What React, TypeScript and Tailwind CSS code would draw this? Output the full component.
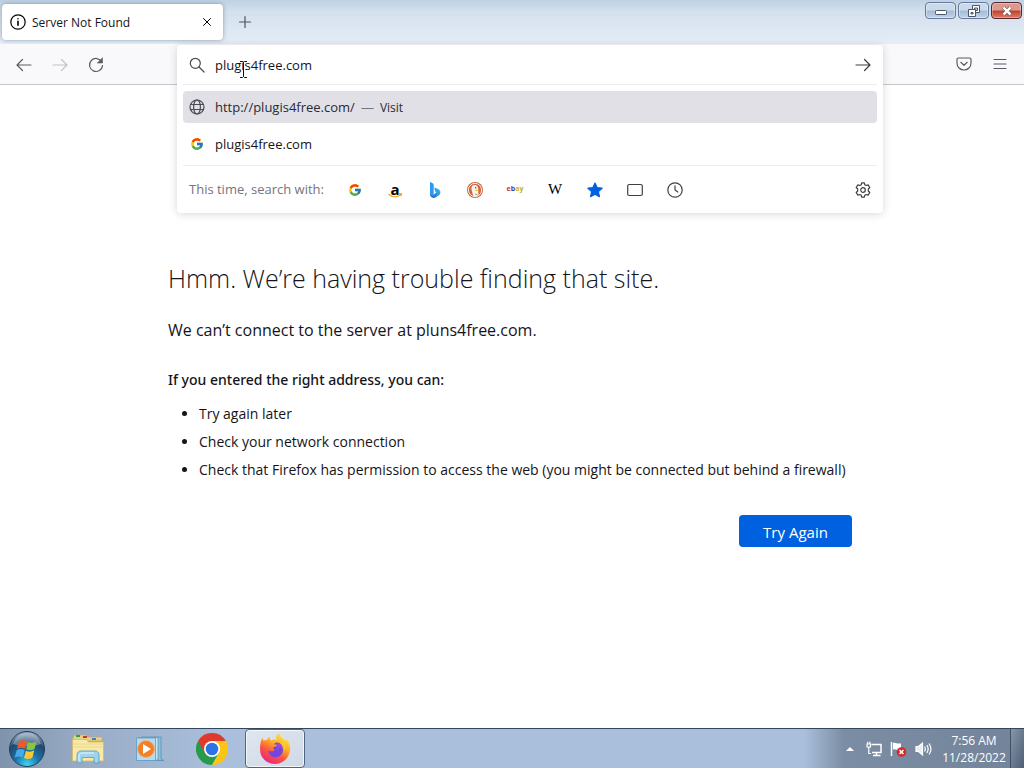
import type { ReactNode } from "react";
import { FcGoogle } from "react-icons/fc";

const tips = [
  "Try again later",
  "Check your network connection",
  "Check that Firefox has permission to access the web (you might be connected but behind a firewall)",
];

function Icon({ children, className = "w-4 h-4" }: { children: ReactNode; className?: string }) {
  return (
    <svg
      viewBox="0 0 16 16"
      className={className}
      fill="none"
      stroke="currentColor"
      strokeWidth="1.2"
      strokeLinecap="round"
      strokeLinejoin="round"
      aria-hidden="true"
    >
      {children}
    </svg>
  );
}

function TabStrip() {
  return (
    <div className="flex h-11 items-start bg-linear-to-b from-[#bfd1e4] via-[#d3e0ed] via-25% to-[#e6eef6]">
      <div className="mt-1 ml-0.5 flex h-9 w-[221px] items-center rounded bg-white pr-2 pl-2 shadow-[0_0_4px_rgba(60,80,110,0.5)]">
        <Icon>
          <circle cx="8" cy="8" r="7.2" />
          <path d="M8 7.2v4M8 4.7v.1" strokeWidth="1.6" />
        </Icon>
        <span className="ml-1.5 flex-1 pt-0.5 text-xs text-[#15141a]">Server Not Found</span>
        <button aria-label="Close tab" className="p-1">
          <Icon className="h-2 w-2">
            <path d="M1 1l14 14M15 1L1 15" strokeWidth="2" />
          </Icon>
        </button>
      </div>
      <button aria-label="New tab" className="mt-3.5 ml-3.5 text-[#4b5563]">
        <Icon>
          <path d="M8 2.5v11M2.5 8h11" />
        </Icon>
      </button>
      <div className="mt-0.5 mr-0.5 ml-auto flex gap-0.5">
        <button
          aria-label="Minimize"
          className="flex h-[17px] w-[31px] items-center justify-center rounded-sm border border-[#64789a] bg-linear-to-b from-[#cbdaea] from-45% via-[#a6bcd6] via-55% to-[#c0d3e8] inset-ring inset-ring-white/40"
        >
          <svg viewBox="0 0 12 6" className="mt-1 h-1.5 w-3">
            <rect x=".5" y=".5" width="11" height="4" rx=".8" fill="#fff" stroke="#4a5568" />
          </svg>
        </button>
        <button
          aria-label="Restore"
          className="flex h-[17px] w-[31px] items-center justify-center rounded-sm border border-[#64789a] bg-linear-to-b from-[#cbdaea] from-45% via-[#a6bcd6] via-55% to-[#c0d3e8] inset-ring inset-ring-white/40"
        >
          <svg viewBox="0 0 12 12" className="h-3 w-3" stroke="#4a5568" fill="#fff">
            <path d="M4.5 .5h7v7h-7zM6.500 3h3v2.500h-3z" fillRule="evenodd" />
            <path d="M.5 4.500h7v7h-7zM3 7.500h2v1.500H3z" fillRule="evenodd" />
          </svg>
        </button>
        <button
          aria-label="Close"
          className="flex h-[17px] w-[31px] items-center justify-center rounded-sm border border-[#5c2630] bg-linear-to-b from-[#dc9a8e] from-45% via-[#c0422e] via-55% to-[#dc7d68] inset-ring inset-ring-white/30"
        >
          <svg viewBox="0 0 12 10" className="h-2.5 w-3" fill="none">
            <path d="M2.500 1.500l7 7M9.500 1.500l-7 7" stroke="#5b3a42" strokeWidth="3.800" />
            <path d="M2.500 1.500l7 7M9.500 1.500l-7 7" stroke="#fff" strokeWidth="2.500" />
          </svg>
        </button>
      </div>
    </div>
  );
}

function BingIcon() {
  return (
    <svg viewBox="0 0 16 16" className="h-4 w-4">
      <defs>
        <linearGradient id="bing-bowl" x1="1" y1="0" x2="0" y2="1">
          <stop offset="0" stopColor="#3fc4f0" />
          <stop offset="1" stopColor="#1a5fd0" />
        </linearGradient>
      </defs>
      <path d="M3 .6c0-.4.400-.6.800-.4l2.200 1.400c.5.3.7.7.7 1.300V13c0 1.600-3.700 2-3.700-.3z" fill="#2e97ee" />
      <path d="M3 12c.2 2 3 2 3.700.5l2.600-2c-.8-.4-1-1-1.300-1.800l-.7-2.200c-.2-.7.3-1 .9-.8l3 1.300c3 1.400 2.800 4.800.6 6.300l-3.300 2.200C5.800 17 3 15 3 12z" fill="url(#bing-bowl)" />
    </svg>
  );
}

function DuckIcon() {
  return (
    <svg viewBox="0 0 16 16" className="h-4 w-4">
      <circle cx="8" cy="8" r="8" fill="#cf6440" />
      <circle cx="8" cy="8" r="6.600" fill="#d0663f" stroke="#fff" strokeWidth=".9" />
      <path d="M4.600 5c.8-2.400 4.600-2.800 6-.4.9 1.500.5 3 .6 4.200l.3 4.200c-1.700 1.300-3.600 1.500-5.300.8C5.700 11 3.900 8 4.600 5z" fill="#fbf3ea" />
      <circle cx="8.600" cy="5.800" r=".8" fill="#33475c" />
      <path d="M8 8c1.200-.7 2.900-.7 3.900-.2-.5 1-2 1.400-3.600 1.500z" fill="#fdc531" />
      <path d="M8.400 11.500l2.600.7-2.400 1z" fill="#5bb44b" />
    </svg>
  );
}

function SearchEngines() {
  return (
    <div className="flex h-12 items-center border-t border-[#ececef] text-[#3f3f48]">
      <span className="w-[160px] pl-1.5 text-[13px] text-[#74747d]">This time, search with:</span>
      <div className="flex flex-1 items-center gap-6 pl-1">
        <button aria-label="Google" className="flex h-4 w-4 items-center justify-center">
          <FcGoogle className="h-3.5 w-3.5" />
        </button>
        <button aria-label="Amazon" className="relative h-4 w-4">
          <span className="block text-center text-[15px] leading-[9px] font-bold text-black">a</span>
          <svg viewBox="0 0 16 5" className="absolute bottom-0 h-[5px] w-4" fill="none" stroke="#f5a623" strokeWidth="1.400">
            <path d="M1.500 1c3.500 3.300 8.300 3.500 12 1M12 .8l2.300-.1-.5 2.300" />
          </svg>
        </button>
        <button aria-label="Bing">
          <BingIcon />
        </button>
        <button aria-label="DuckDuckGo">
          <DuckIcon />
        </button>
        <button aria-label="eBay" className="flex h-4 w-4 items-center justify-center text-[7px] font-bold">
          <span className="text-[#d8343c]">e</span>
          <span className="text-[#3a42b4]">b</span>
          <span className="text-[#e8ae17]">a</span>
          <span className="text-[#a6b830]">y</span>
        </button>
        <button aria-label="Wikipedia" className="flex h-4 w-4 items-center justify-center font-['Liberation_Serif',serif] text-[15px] text-black">
          W
        </button>
        <button aria-label="Bookmarks" className="text-[#0061e0]">
          <Icon>
            <path d="M8 1l2.100 4.600 5 .6-3.700 3.400 1 5L8 12.200l-4.400 2.400 1-5L.9 6.200l5-.6z" fill="currentColor" />
          </Icon>
        </button>
        <button aria-label="Tabs">
          <Icon>
            <rect x=".7" y="2.500" width="14.600" height="11" rx="1.500" />
          </Icon>
        </button>
        <button aria-label="History">
          <Icon>
            <circle cx="8" cy="8" r="7.200" />
            <path d="M8 3.800V8l2.800 2" />
          </Icon>
        </button>
      </div>
      <button aria-label="Search settings" className="mr-1.5">
        <Icon>
          <circle cx="8" cy="8" r="2.300" />
          <path d="M6.700 .8h2.600l.5 2 1.300.7 2-.6 1.700 2.600-1.500 1.500v2l1.500 1.500-1.700 2.600-2-.6-1.300.7-.5 2H6.700l-.5-2-1.300-.7-2 .6-1.700-2.600L2.700 9V7L1.200 5.500l1.700-2.600 2 .6 1.300-.7z" />
        </Icon>
      </button>
    </div>
  );
}

function UrlPanel() {
  return (
    <div className="absolute inset-x-0 top-px z-10 rounded-sm bg-white px-1.5 shadow-[0_1px_8px_rgba(0,0,0,0.16)]">
      <form className="relative flex h-10 items-center border-b border-[#ececef] px-1.5">
        <span className="text-[#4a4a55]">
          <Icon>
            <circle cx="6.300" cy="6.300" r="5" />
            <path d="M10 10l5 5" />
          </Icon>
        </span>
        <input
          aria-label="Search or enter address"
          defaultValue="plugis4free.com"
          className="ml-2.5 min-w-0 flex-1 bg-transparent pt-0.5 text-[13px] text-[#15141a] outline-none"
        />
        <button aria-label="Go" type="button" className="text-[#3c3c46]">
          <Icon>
            <path d="M1 8h14M9.500 2.500L15 8l-5.500 5.500" />
          </Icon>
        </button>
        <svg viewBox="0 0 9 17" className="pointer-events-none absolute top-4 left-14 h-[17px] w-[9px]" fill="none" stroke="#111">
          <path d="M1 .5h2.500l1 1 1-1H8M4.500 1.500v14M1 16.500h2.500l1-1 1 1H8" />
        </svg>
      </form>
      <div className="pt-1.5 pb-[5px]">
        <a href="#visit" className="flex h-8 items-center rounded bg-[#e0e0e6] px-1.5 text-[13px] text-[#2b2a33]">
          <span className="text-[#4a4a55]">
            <Icon>
              <circle cx="8" cy="8" r="7" />
              <ellipse cx="8" cy="8" rx="3.400" ry="7" />
              <path d="M1.500 5.500h13M1.500 10.500h13" />
            </Icon>
          </span>
          <span className="ml-2.5 pt-0.5">http://plugis4free.com/</span>
          <span className="mx-1.5 pt-0.5 text-[#74747d]">—</span>
          <span className="pt-0.5 text-xs">Visit</span>
        </a>
        <a href="#search" className="mt-[5px] flex h-8 items-center px-1.5 text-[13px] text-[#15141a]">
          <span className="flex w-4 justify-center">
            <FcGoogle className="h-3.5 w-3.5" />
          </span>
          <span className="ml-2.5 pt-0.5">plugis4free.com</span>
        </a>
      </div>
      <SearchEngines />
    </div>
  );
}

function Toolbar() {
  return (
    <div className="flex h-[41px] items-start border-b border-[#c5c5ca] bg-[#f9f9fb] text-[#5b5b66]">
      <div className="flex h-[41px] w-[177px] items-center gap-5 pl-4">
        <button aria-label="Back">
          <Icon>
            <path d="M15 8H1M6.500 2.500L1 8l5.500 5.500" />
          </Icon>
        </button>
        <button aria-label="Forward" className="text-[#c2c2c8]">
          <Icon>
            <path d="M1 8h14M9.500 2.500L15 8l-5.500 5.500" />
          </Icon>
        </button>
        <button aria-label="Reload">
          <Icon>
            <path d="M13.800 5A6.500 6.500 0 1 0 14.500 8.500" />
            <path d="M14.500 1v5h-5z" fill="currentColor" strokeWidth=".6" />
          </Icon>
        </button>
      </div>
      <div className="relative flex-1">
        <UrlPanel />
      </div>
      <div className="flex h-10 w-[141px] items-center justify-end gap-5 pr-4">
        <button aria-label="Save to Pocket">
          <Icon>
            <path d="M2.200 2h11.600c.8 0 1.200.5 1.200 1.200V7c0 4-3 7-7 7S1 11 1 7V3.200C1 2.500 1.400 2 2.200 2z" />
            <path d="M4.800 6.300L8 9.300l3.200-3" />
          </Icon>
        </button>
        <button aria-label="Menu">
          <Icon>
            <path d="M2 3.500h12M2 8h12M2 12.500h12" />
          </Icon>
        </button>
      </div>
    </div>
  );
}

function ErrorPage() {
  return (
    <main className="flex-1 px-4 pt-[175px] text-[#15141a]">
      <div className="mx-auto max-w-[688px]">
        <h1 className="text-[25px] leading-9 font-light">Hmm. We’re having trouble finding that site.</h1>
        <p className="mt-[22px] text-base leading-6">We can’t connect to the server at pluns4free.com.</p>
        <h2 className="mt-6 font-['Noto_Sans',sans-serif] text-sm leading-7 font-medium">
          If you entered the right address, you can:
        </h2>
        <ul className="mt-1.5 list-disc pl-[31px] text-sm leading-7">
          {tips.map((tip) => (
            <li key={tip}>{tip}</li>
          ))}
        </ul>
        <div className="mt-[31px] flex justify-end pr-1">
          <button className="h-8 w-[113px] rounded bg-[#0061e0] pt-0.5 text-[15px] text-white">Try Again</button>
        </div>
      </div>
    </main>
  );
}

function StartOrb() {
  return (
    <svg viewBox="0 0 38 38" className="h-[38px] w-[38px]">
      <defs>
        <radialGradient id="orb" cx=".5" cy=".95" r=".9">
          <stop offset="0" stopColor="#3fd6f5" />
          <stop offset=".4" stopColor="#1873a8" />
          <stop offset=".75" stopColor="#23476e" />
          <stop offset="1" stopColor="#8aa3ba" />
        </radialGradient>
      </defs>
      <circle cx="19" cy="19" r="17.500" fill="url(#orb)" stroke="#20405f" />
      <path d="M5 14C8 6 13 3 19 3s11 3 14 11c-8 3-20 3-28 0z" fill="#fff" opacity=".3" />
      <path d="M11 11.500c3-1.800 5.500-1.500 8 0l-2 7.500c-2.500-1.500-5-1.700-8 0z" fill="#ee5a24" />
      <path d="M20 12c2.700 1.400 5.300 1.300 8.500-.5l-2 7.500c-3 1.700-5.500 1.700-8.200.3z" fill="#8ac540" />
      <path d="M8.700 20.300c3-1.700 5.500-1.500 8 0l-2 7.200c-2.600-1.500-5-1.500-8 0z" fill="#4aa8e8" />
      <path d="M18 20.700c2.700 1.400 5.300 1.300 8.300-.4l-2 7.400c-3 1.700-5.600 1.600-8.300.2z" fill="#fdc82f" />
    </svg>
  );
}

function ExplorerIcon() {
  return (
    <svg viewBox="0 0 34 30" className="h-[30px] w-[34px]">
      <path d="M2 3l2-2h11l2 2h14v4H2z" fill="#e9d184" stroke="#c5a44e" strokeWidth=".6" />
      <path d="M5 1h4v2H5z" fill="#2f9e44" />
      <path d="M12 2h4v2h-4z" fill="#c0392b" />
      <path d="M21 4h4v2h-4z" fill="#3b82c4" />
      <path d="M1.500 5.500h14l2 2.500h15v19h-31z" fill="#f8e9a8" stroke="#d6b75e" strokeWidth=".7" />
      <path d="M2 13h30M2 10h30" stroke="#ecd88c" />
      <path d="M6 29v-8c0-3 2-4 4-4h14c2 0 4 1 4 4v8h-5v-5.500H11V29z" fill="#9fd3ee" stroke="#4f9ac4" strokeWidth=".8" />
      <path d="M8 27v-5c0-2 1-3 3-3h12" stroke="#e6f7ff" fill="none" />
    </svg>
  );
}

function MediaPlayerIcon() {
  return (
    <svg viewBox="0 0 30 26" className="h-[26px] w-[30px]">
      <path d="M7 1h19v22l3 1.500H10z" fill="#8fc0dc" stroke="#4c8db5" strokeWidth=".7" />
      <path d="M4 1.500h19V24H4z" fill="#cbe6f3" stroke="#4c8db5" strokeWidth=".7" />
      <path d="M1.500 2h19v22.500h-19z" fill="#b6dbee" stroke="#5a9cc4" strokeWidth=".8" />
      <circle cx="11" cy="13" r="8.500" fill="#f08126" stroke="#f7b27a" />
      <path d="M8 8l8 5-8 5z" fill="#fff" />
    </svg>
  );
}

function ChromeIcon() {
  return (
    <svg viewBox="0 0 32 32" className="h-8 w-8">
      <path d="M16 16L2.140 8A16 16 0 0 0 16 32l7-12z" fill="#279b4c" />
      <path d="M16 8h13.860A16 16 0 0 1 16 32l7-12z" fill="#fbc516" />
      <path d="M16 8h13.860A16 16 0 0 0 2.140 8L9 20z" fill="#df3a2c" />
      <circle cx="16" cy="16" r="8" fill="#fff" />
      <circle cx="16" cy="16" r="6.300" fill="#2c74e4" />
    </svg>
  );
}

function FirefoxIcon() {
  return (
    <svg viewBox="0 0 32 32" className="h-8 w-8">
      <defs>
        <linearGradient id="fox" x1=".85" y1="0" x2=".3" y2="1">
          <stop offset="0" stopColor="#fff04a" />
          <stop offset=".4" stopColor="#ffae24" />
          <stop offset=".68" stopColor="#fb5340" />
          <stop offset="1" stopColor="#e6268a" />
        </linearGradient>
      </defs>
      <path
        d="M3.500 4.500c0 1.500.500 2.500 1.100 3.100 1-.6 2-.8 3.200-.7.7-1.500 1.800-2.600 3-3.100-.3 1.500.1 2.700 1 3.600 3-1.200 4.300-.8 5.700-.4C16.500 4 17.500 1.500 20 0c.5 3.800 4.300 5.300 6.300 8 .3-.9.200-1.700 0-2.500C30 8.500 32 13 31 18c-1.500 8-8 13-15 13C7.500 31 1 24.500 1 16.500 1 12 1.700 7.500 3.500 4.500z"
        fill="url(#fox)"
      />
      <path d="M17.500 9.500c4 0 6.500 3.500 6.500 7.500s-3.300 7.200-7.500 7.200S9.500 21 9.500 17.500c3 2 5 .8 6.500-.7-1.200-.4-2-1.300-1.600-2.300 1-.9 3.300-.9 3.800-2.500-.8-.6-2.200-.5-3.200-.6.6-1 1.500-1.800 2.500-1.900z" fill="#7745dd" />
      <path d="M18 9.500c3.800.8 5.500 3.500 5 7-.4-1.700-1.300-3-2.700-3.500.4 2.500-.8 4-2.500 4.800 1.200-2.600.8-5.800.2-8.300z" fill="#9a4fd8" />
      <path d="M19.500 7.500c4.500 2.200 6.200 5.800 5.500 10.500 2.200-3 1.500-7-.5-10z" fill="#ffcb31" />
    </svg>
  );
}

function Taskbar() {
  return (
    <footer className="flex h-10 items-stretch border-t border-[#33465c] bg-linear-[to_right,#8093ad_0,#98abc5_80px,#a9bfdb_220px,#a9bfdb_calc(100%-220px),#7b8da4_calc(100%-180px),#73849a_100%]">
      <button aria-label="Start" className="ml-2 flex w-[38px] items-center">
        <StartOrb />
      </button>
      <button aria-label="Windows Explorer" className="ml-3 flex w-[60px] items-center justify-center">
        <ExplorerIcon />
      </button>
      <button aria-label="Media Player" className="ml-0.5 flex w-[60px] items-center justify-center">
        <MediaPlayerIcon />
      </button>
      <button aria-label="Chrome" className="ml-0.5 flex w-[60px] items-center justify-center">
        <ChromeIcon />
      </button>
      <button
        aria-label="Firefox"
        className="ml-[3px] flex w-[60px] items-center justify-center rounded-sm border border-[#52647c] bg-linear-to-br from-[#dfe6ef] to-[#cfd9e6] inset-ring inset-ring-white/70"
      >
        <FirefoxIcon />
      </button>
      <div className="ml-auto flex items-center text-white">
        <button aria-label="Show hidden icons">
          <svg viewBox="0 0 8 4" className="h-1 w-2" fill="#fff">
            <path d="M0 4l4-4 4 4z" />
          </svg>
        </button>
        <svg viewBox="0 0 16 16" className="ml-3 h-4 w-4" fill="none" stroke="#fff" strokeWidth="1.500">
          <path d="M5.500 3.500h9.500v8H6M10.500 11.500v3M7 14.500h7.500" />
          <path d="M1 3h3.500v3H1zM1.700 3V.8M3.800 3V.8M2.800 6v6.500H5" strokeWidth="1.200" />
        </svg>
        <svg viewBox="0 0 17 16" className="ml-2 h-4 w-[17px]">
          <path d="M1.500 1v14" stroke="#fff" strokeWidth="1.500" />
          <path d="M3 2c3-1.200 4 1.500 8 .3v6.500c-4 1-5-1.300-8-.3z" fill="#fff" />
          <circle cx="11.500" cy="11" r="4.800" fill="#d42a2a" />
          <path d="M9.500 9l4 4M13.500 9l-4 4" stroke="#fff" strokeWidth="1.500" />
        </svg>
        <svg viewBox="0 0 17 16" className="ml-2 h-4 w-[17px]" fill="none" stroke="#fff" strokeWidth="1.200">
          <path d="M1 5.500h2.500L7.500 2v12L3.500 10.500H1z" fill="#e8edf3" />
          <path d="M9.500 5.500c1 1.500 1 3.500 0 5M11.800 4c1.700 2.500 1.700 5.500 0 8M14 2.500c2.500 3.500 2.500 7.500 0 11" />
        </svg>
        <div className="ml-2.5 w-[64px] text-center text-xs leading-[17px]">
          <div>7:56 AM</div>
          <div>11/28/2022</div>
        </div>
        <button
          aria-label="Show desktop"
          className="ml-1 h-full w-3.5 border-l border-[#3f5065] bg-linear-to-br from-[#8796a9] to-[#4d5f76]"
        />
      </div>
    </footer>
  );
}

export default function App() {
  return (
    <div className="flex min-h-screen flex-col bg-white font-['Open_Sans','Noto_Sans',sans-serif]">
      <TabStrip />
      <Toolbar />
      <ErrorPage />
      <Taskbar />
    </div>
  );
}
